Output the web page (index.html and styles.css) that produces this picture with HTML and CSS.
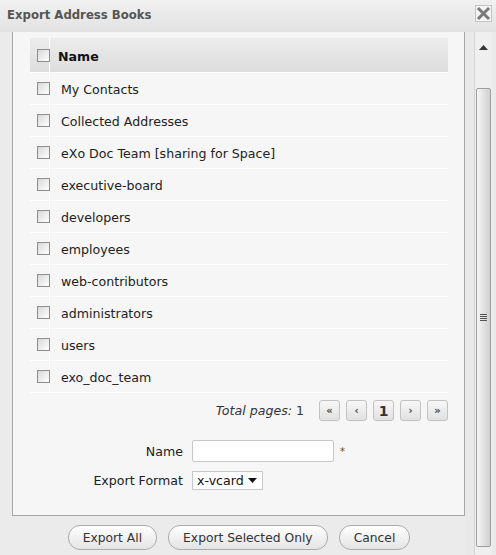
FILE: index.html
```html
<!DOCTYPE html>
<html>
<head>
<meta charset="utf-8">
<link rel="stylesheet" href="styles.css">
</head>
<body>
<div class="dialog">
  <div class="titlebar">
    <span class="title">Export Address Books</span>
    <span class="close"><svg width="15" height="15" viewBox="0 0 15 15"><path d="M3 3 L12 12 M12 3 L3 12" stroke="#7a7a7a" stroke-width="3" stroke-linecap="square"/></svg></span>
  </div>
  <div class="main">
    <div class="content">
      <div class="panel">
        <div class="grid">
          <div class="hrow">
            <div class="ccell"><span class="cb"></span></div>
            <div class="ncell hname">Name</div>
          </div>
          <div class="row"><div class="ccell"><span class="cb"></span></div><div class="ncell">My Contacts</div></div>
          <div class="row"><div class="ccell"><span class="cb"></span></div><div class="ncell">Collected Addresses</div></div>
          <div class="row"><div class="ccell"><span class="cb"></span></div><div class="ncell">eXo Doc Team [sharing for Space]</div></div>
          <div class="row"><div class="ccell"><span class="cb"></span></div><div class="ncell">executive-board</div></div>
          <div class="row"><div class="ccell"><span class="cb"></span></div><div class="ncell">developers</div></div>
          <div class="row"><div class="ccell"><span class="cb"></span></div><div class="ncell">employees</div></div>
          <div class="row"><div class="ccell"><span class="cb"></span></div><div class="ncell">web-contributors</div></div>
          <div class="row"><div class="ccell"><span class="cb"></span></div><div class="ncell">administrators</div></div>
          <div class="row"><div class="ccell"><span class="cb"></span></div><div class="ncell">users</div></div>
          <div class="row"><div class="ccell"><span class="cb"></span></div><div class="ncell">exo_doc_team</div></div>
        </div>
        <div class="pager">
          <span class="total"><i>Total pages:</i> 1</span>
          <span class="pbtn sm">«</span>
          <span class="pbtn sm">‹</span>
          <span class="pbtn cur">1</span>
          <span class="pbtn sm">›</span>
          <span class="pbtn sm">»</span>
        </div>
        <div class="form">
          <div class="frow">
            <label class="flabel">Name</label>
            <span class="finput"></span>
            <span class="req">*</span>
          </div>
          <div class="frow">
            <label class="flabel">Export Format</label>
            <span class="fselect">x-vcard <svg width="9" height="5" viewBox="0 0 9 5"><path d="M0 0 H9 L4.5 5 Z" fill="#111"/></svg></span>
          </div>
        </div>
      </div>
      <div class="actions">
        <span class="btn">Export All</span>
        <span class="btn">Export Selected Only</span>
        <span class="btn">Cancel</span>
      </div>
    </div>
    <div class="scrollbar">
      <div class="arrow"><svg width="9" height="5" viewBox="0 0 9 5"><path d="M4.5 0 L9 5 H0 Z" fill="#333"/></svg></div>
      <div class="thumb"><span class="grip"></span></div>
    </div>
  </div>
</div>
</body>
</html>
```
FILE: styles.css
```css
html, body {
  margin: 0;
  padding: 0;
}
body {
  font-family: "DejaVu Sans", Verdana, sans-serif;
  font-size: 12.6px;
  color: #222;
  background: #e9e9e9;
}
.dialog {
  width: 496px;
  height: 555px;
  display: flex;
  flex-direction: column;
  overflow: hidden;
}
.titlebar {
  height: 32px;
  flex: none;
  display: flex;
  align-items: flex-start;
  justify-content: space-between;
  background: linear-gradient(#f1f1f1, #e2e2e2);
  box-sizing: border-box;
}
.title {
  font-weight: bold;
  font-size: 11.7px;
  color: #555;
  margin: 8px 0 0 7px;
}
.close {
  width: 15px;
  height: 15px;
  margin: 5px 4px 0 0;
  border: 1px solid #c4c4c4;
  background: #f4f4f4;
  display: flex;
}
.main {
  flex: 1;
  display: flex;
  min-height: 0;
}
.content {
  flex: none;
  width: 465px;
  padding-left: 12px;
  box-sizing: border-box;
  background: #ebebeb;
}
.panel {
  height: 484px;
  box-sizing: border-box;
  background: #f6f6f6;
  border: 1px solid #a6a6a6;
  border-top: none;
  padding: 6px 16px 0 17px;
}
.grid {
  display: flex;
  flex-direction: column;
}
.hrow, .row {
  display: flex;
  border-bottom: 1px solid #fff;
}
.hrow {
  height: 34px;
  background: linear-gradient(#ececec, #dddddd);
}
.row {
  height: 31px;
}
.ccell {
  border-right: 1px solid #fff;
  display: flex;
  align-items: center;
  padding-left: 7px;
  box-sizing: border-box;
  width: 20px;
}
.cb {
  width: 11px;
  height: 11px;
  border: 1px solid #8e8e8e;
  background: linear-gradient(135deg, #d8d8d8, #ffffff);
  flex: none;
}
.ncell {
  display: flex;
  align-items: center;
  padding-left: 11px;
  padding-top: 2px;
}
.hname {
  font-weight: bold;
  color: #111;
  padding-left: 8px;
  padding-top: 2px;
}
.pager {
  display: flex;
  justify-content: flex-end;
  align-items: center;
  gap: 6px;
  margin-top: 6px;
  height: 23px;
}
.total {
  color: #333;
  margin-right: 9px;
}
.pbtn {
  width: 19px;
  height: 19px;
  border: 1px solid #c2c2c2;
  border-radius: 3px;
  background: linear-gradient(#f7f7f7, #e1e1e1);
  display: flex;
  align-items: center;
  justify-content: center;
  font-weight: bold;
  color: #444;
}
.pbtn.sm {
  font-size: 10px;
}
.pbtn.cur {
  font-size: 14px;
  color: #333;
}
.form {
  display: flex;
  flex-direction: column;
  gap: 9px;
  margin-top: 18px;
}
.frow {
  display: flex;
  align-items: center;
}
.flabel {
  text-align: right;
  padding-right: 9px;
  flex: none;
  box-sizing: border-box;
  width: 162px;
}
.finput {
  width: 140px;
  height: 20px;
  border: 1px solid #c8c8c8;
  border-radius: 2px;
  background: #fff;
}
.req {
  color: #6a4a20;
  font-size: 10px;
  margin-left: 6px;
}
.fselect {
  height: 17px;
  border: 1px solid #c8c8c8;
  background: #fff;
  display: flex;
  align-items: center;
  justify-content: space-between;
  padding: 0 5px 0 4px;
  width: 60px;
  color: #111;
}
.actions {
  display: flex;
  justify-content: center;
  gap: 11px;
  margin-top: 9px;
  padding-left: 1px;
}
.btn {
  border: 1px solid #ababab;
  border-radius: 12px;
  background: linear-gradient(#ffffff, #e4e4e4);
  display: flex;
  align-items: center;
  padding: 0 14px;
  color: #333;
  height: 23px;
  font-size: 12.3px;
}
.scrollbar {
  width: 17px;
  margin-left: 9px;
  border-left: 1px solid #d6d6d6;
  background: #efefef;
  display: flex;
  flex-direction: column;
  align-items: center;
}
.arrow {
  height: 12px;
  margin-top: 9px;
  display: flex;
  align-items: center;
}
.thumb {
  margin-top: 35px;
  width: 13px;
  height: 457px;
  border: 1px solid #9e9e9e;
  border-radius: 2px;
  background: linear-gradient(90deg, #f6f6f6, #e2e2e2 50%, #d0d0d0);
  display: flex;
  align-items: center;
  justify-content: center;
}
.grip {
  width: 7px;
  height: 7px;
  background: repeating-linear-gradient(#555 0 1px, transparent 1px 2px);
}
```
